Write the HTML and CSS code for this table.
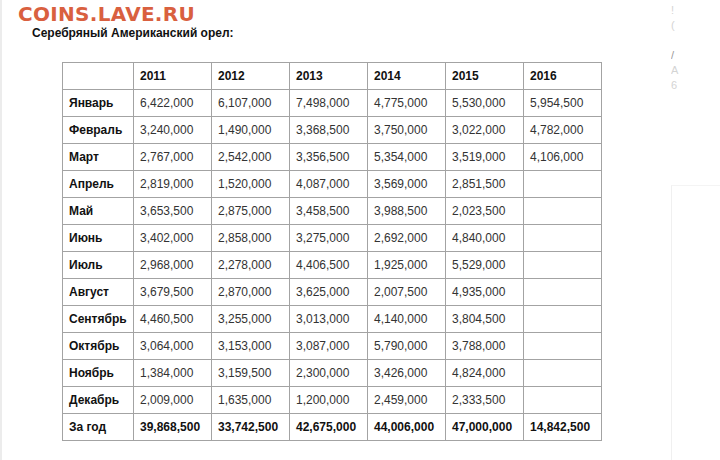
FILE: index.html
```html
<!DOCTYPE html>
<html lang="ru">
<head>
<meta charset="utf-8">
<link rel="stylesheet" href="styles.css">
</head>
<body>
<div class="page">
  <main class="main">
    <div class="logo">COINS.LAVE.RU</div>
    <h1 class="title">Серебряный Американский орел:</h1>
    <table class="sales">
      <thead>
        <tr><th class="first"></th><th>2011</th><th>2012</th><th>2013</th><th>2014</th><th>2015</th><th>2016</th></tr>
      </thead>
      <tbody>
        <tr><th>Январь</th><td>6,422,000</td><td>6,107,000</td><td>7,498,000</td><td>4,775,000</td><td>5,530,000</td><td>5,954,500</td></tr>
        <tr><th>Февраль</th><td>3,240,000</td><td>1,490,000</td><td>3,368,500</td><td>3,750,000</td><td>3,022,000</td><td>4,782,000</td></tr>
        <tr><th>Март</th><td>2,767,000</td><td>2,542,000</td><td>3,356,500</td><td>5,354,000</td><td>3,519,000</td><td>4,106,000</td></tr>
        <tr><th>Апрель</th><td>2,819,000</td><td>1,520,000</td><td>4,087,000</td><td>3,569,000</td><td>2,851,500</td><td></td></tr>
        <tr><th>Май</th><td>3,653,500</td><td>2,875,000</td><td>3,458,500</td><td>3,988,500</td><td>2,023,500</td><td></td></tr>
        <tr><th>Июнь</th><td>3,402,000</td><td>2,858,000</td><td>3,275,000</td><td>2,692,000</td><td>4,840,000</td><td></td></tr>
        <tr><th>Июль</th><td>2,968,000</td><td>2,278,000</td><td>4,406,500</td><td>1,925,000</td><td>5,529,000</td><td></td></tr>
        <tr><th>Август</th><td>3,679,500</td><td>2,870,000</td><td>3,625,000</td><td>2,007,500</td><td>4,935,000</td><td></td></tr>
        <tr><th>Сентябрь</th><td>4,460,500</td><td>3,255,000</td><td>3,013,000</td><td>4,140,000</td><td>3,804,500</td><td></td></tr>
        <tr><th>Октябрь</th><td>3,064,000</td><td>3,153,000</td><td>3,087,000</td><td>5,790,000</td><td>3,788,000</td><td></td></tr>
        <tr><th>Ноябрь</th><td>1,384,000</td><td>3,159,500</td><td>2,300,000</td><td>3,426,000</td><td>4,824,000</td><td></td></tr>
        <tr><th>Декабрь</th><td>2,009,000</td><td>1,635,000</td><td>1,200,000</td><td>2,459,000</td><td>2,333,500</td><td></td></tr>
        <tr class="total"><th>За год</th><td>39,868,500</td><td>33,742,500</td><td>42,675,000</td><td>44,006,000</td><td>47,000,000</td><td>14,842,500</td></tr>
      </tbody>
    </table>
  </main>
  <aside class="side">
    <div class="side-top">
      <span>!</span>
      <span>(</span>
      <span class="gap">/</span>
      <span>A</span>
      <span>6</span>
    </div>
    <div class="side-box"></div>
  </aside>
</div>
</body>
</html>
```
FILE: styles.css
```css
html, body {
  margin: 0;
  padding: 0;
  background: #fff;
}
.page {
  width: 720px;
  height: 460px;
  overflow: hidden;
  display: flex;
  border-left: 2px solid #ececec;
  box-sizing: border-box;
  font-family: "Liberation Sans", Arial, sans-serif;
}
.main {
  width: 669px;
  flex: none;
}
.logo {
  margin: 2px 0 0 16px;
  font-family: "DejaVu Sans", Verdana, sans-serif;
  font-weight: bold;
  font-size: 20px;
  line-height: 24px;
  color: #d9603f;
  letter-spacing: 0.3px;
}
.title {
  margin: 0 0 0 30px;
  font-size: 12px;
  font-weight: bold;
  line-height: 15px;
  color: #111;
}
.sales {
  margin: 21px 0 0 60px;
  border-collapse: collapse;
  font-size: 12px;
  color: #222;
}
.sales th, .sales td {
  border: 1px solid #a3a3a3;
  height: 27px;
  padding: 0 6px;
  text-align: left;
  box-sizing: border-box;
  width: 78px;
}
.sales th {
  font-weight: bold;
  color: #111;
}
.sales th.first, .sales tbody th {
  width: 71px;
}
.sales td {
  font-weight: normal;
  color: #333;
}
.sales .total td {
  font-weight: bold;
  color: #111;
}
.side {
  flex: 1;
  position: relative;
  overflow: hidden;
}
.side-top {
  display: flex;
  flex-direction: column;
  padding: 3px 0 0 0;
  font-size: 11px;
  line-height: 14px;
  color: #d4d4d4;
}
.side-top .gap {
  margin-top: 16px;
  color: #999;
}
.side-top span + span:not(.gap) {
  margin-top: 1px;
}
.side-box {
  margin-top: 93px;
  height: 400px;
  border-left: 1px solid #f0f0f0;
  border-top: 1px solid #f4f4f4;
}
```
